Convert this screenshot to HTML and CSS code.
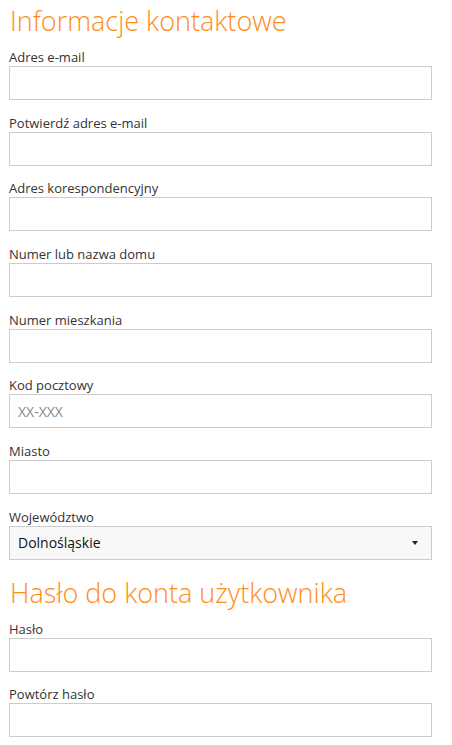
FILE: index.html
```html
<!DOCTYPE html>
<html lang="pl">

<head>
    <meta charset="UTF-8">
    <meta name="viewport" content="width=device-width, initial-scale=1.0">
    <title>Rejestracja</title>
    <link rel="stylesheet" href="styles.css">
</head>

<body>
    <form class="register-form">
        <h2 class="section-title">Informacje kontaktowe</h2>

        <div class="form-group">
            <label for="email">Adres e-mail</label>
            <input type="text" id="email">
        </div>
        <div class="form-group">
            <label for="email2">Potwierdź adres e-mail</label>
            <input type="text" id="email2">
        </div>
        <div class="form-group">
            <label for="address">Adres korespondencyjny</label>
            <input type="text" id="address">
        </div>
        <div class="form-group">
            <label for="house">Numer lub nazwa domu</label>
            <input type="text" id="house">
        </div>
        <div class="form-group">
            <label for="flat">Numer mieszkania</label>
            <input type="text" id="flat">
        </div>
        <div class="form-group">
            <label for="zip">Kod pocztowy</label>
            <input type="text" id="zip" placeholder="XX-XXX">
        </div>
        <div class="form-group">
            <label for="city">Miasto</label>
            <input type="text" id="city">
        </div>
        <div class="form-group">
            <label for="region">Województwo</label>
            <div class="select-wrap">
                <select id="region">
                    <option>Dolnośląskie</option>
                    <option>Kujawsko-pomorskie</option>
                    <option>Lubelskie</option>
                    <option>Lubuskie</option>
                    <option>Łódzkie</option>
                    <option>Małopolskie</option>
                    <option>Mazowieckie</option>
                </select>
            </div>
        </div>

        <h2 class="section-title second">Hasło do konta użytkownika</h2>

        <div class="form-group">
            <label for="pass">Hasło</label>
            <input type="password" id="pass">
        </div>
        <div class="form-group">
            <label for="pass2">Powtórz hasło</label>
            <input type="password" id="pass2">
        </div>
    </form>
</body>

</html>
```

FILE: styles.css
```css
body {
    font-family: 'Open Sans', 'Noto Sans', sans-serif;
    margin: 0;
    padding: 0;
    background: #fff;
    color: #333;
}

.register-form {
    width: 423px;
    padding: 0 0 0 9px;
}

.section-title {
    font-size: 27px;
    font-weight: 300;
    line-height: 34px;
    color: #ff8c1a;
    margin: 4px 0 10px 1px;
}

.section-title.second {
    margin-top: 16px;
}

.form-group {
    display: flex;
    flex-direction: column;
    margin-bottom: 13.67px;
}

.form-group label {
    font-size: 13px;
    line-height: 18px;
    color: #333;
}

.form-group input,
.form-group select {
    box-sizing: border-box;
    width: 100%;
    height: 34px;
    margin: 0;
    padding: 0 8px;
    border: 1px solid #ccc;
    border-radius: 0;
    background: #fff;
    font-family: 'Open Sans', 'Noto Sans', sans-serif;
    font-size: 14px;
    color: #222;
    outline: none;
}

.form-group input::placeholder {
    color: #888;
}

.select-wrap {
    position: relative;
}

.form-group select {
    appearance: none;
    -webkit-appearance: none;
    background: #f8f8f8;
    color: #111;
}

.select-wrap::after {
    content: "";
    position: absolute;
    right: 14px;
    top: 15px;
    border-left: 3px solid transparent;
    border-right: 3px solid transparent;
    border-top: 4px solid #222;
    pointer-events: none;
}
```
